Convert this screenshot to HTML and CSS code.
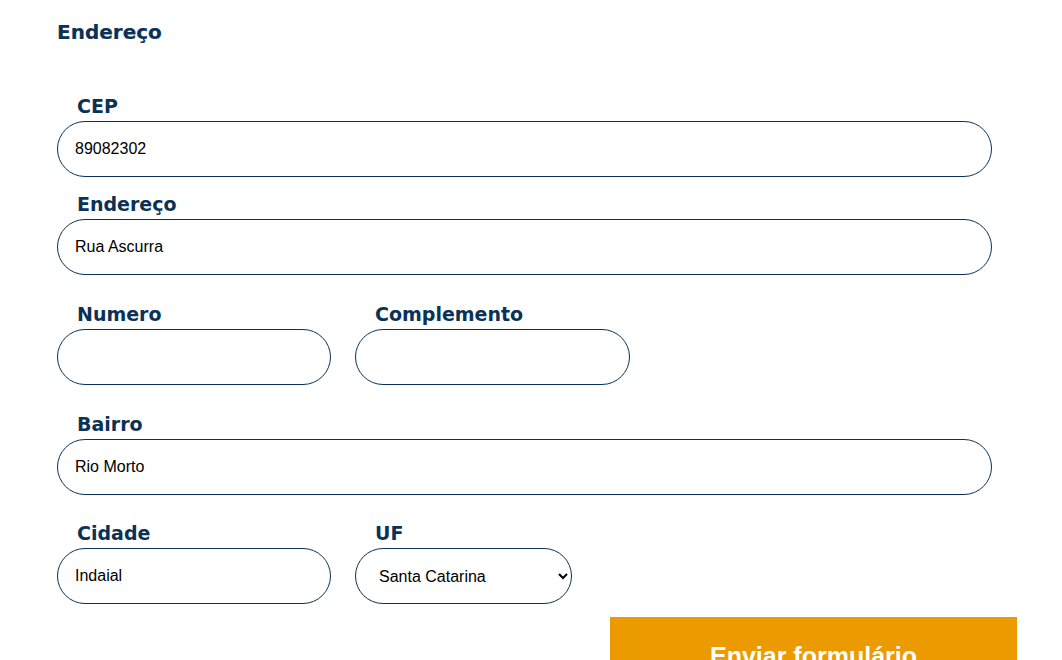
FILE: index.html
```html
<!DOCTYPE html>
<html lang="pt-BR">
<head>
<meta charset="utf-8">
<title>Endereço</title>
<link rel="stylesheet" href="styles.css">
</head>
<body>
<form class="form">
  <h2 class="title">Endereço</h2>
  <div class="group tight">
    <div class="field full">
      <label class="label" for="cep">CEP</label>
      <input class="input" id="cep" type="text" value="89082302">
    </div>
    <div class="field full gap-sm">
      <label class="label" for="end">Endereço</label>
      <input class="input" id="end" type="text" value="Rua Ascurra">
    </div>
  </div>
  <div class="row">
    <div class="field half">
      <label class="label" for="num">Numero</label>
      <input class="input" id="num" type="text" value="">
    </div>
    <div class="field half wide">
      <label class="label" for="comp">Complemento</label>
      <input class="input" id="comp" type="text" value="">
    </div>
  </div>
  <div class="row">
    <div class="field full">
      <label class="label" for="bairro">Bairro</label>
      <input class="input" id="bairro" type="text" value="Rio Morto">
    </div>
  </div>
  <div class="row last">
    <div class="field half">
      <label class="label" for="cidade">Cidade</label>
      <input class="input" id="cidade" type="text" value="Indaial">
    </div>
    <div class="field uf">
      <label class="label" for="uf">UF</label>
      <select class="select" id="uf">
        <option>Santa Catarina</option>
      </select>
    </div>
  </div>
  <div class="actions">
    <button class="submit" type="button">Enviar formulário</button>
  </div>
</form>
</body>
</html>
```
FILE: styles.css
```css
html, body {
  margin: 0;
  padding: 0;
  background: #ffffff;
  overflow: hidden;
}
body {
  width: 1062px;
  height: 660px;
}
.form {
  padding: 19px 0 0 57px;
  width: 960px;
}
.title {
  margin: 0;
  font-family: "DejaVu Sans", sans-serif;
  font-weight: 700;
  font-size: 20px;
  line-height: 27px;
  color: #0a3256;
  -webkit-text-stroke: 0.2px #0a3256;
}
.group.tight {
  margin-top: 47px;
  display: flex;
  flex-direction: column;
}
.gap-sm {
  margin-top: 14px;
}
.row {
  display: flex;
  gap: 24px;
  margin-top: 26px;
}
.row.last {
  margin-top: 25px;
}
.field {
  display: flex;
  flex-direction: column;
}
.field.full {
  width: 935px;
}
.field.half {
  width: 274px;
}
.field.half.wide {
  width: 275px;
}
.field.uf {
  width: 217px;
}
.label {
  display: block;
  padding: 0 0 2px 20px;
  font-family: "DejaVu Sans", sans-serif;
  font-weight: 700;
  font-size: 19px;
  line-height: 26px;
  color: #0a3256;
}
.input,
.select {
  box-sizing: border-box;
  height: 56px;
  width: 100%;
  margin: 0;
  border: 1px solid #0a3256;
  border-radius: 28px;
  background: #ffffff;
  font-family: "Liberation Sans", Arial, sans-serif;
  font-size: 16px;
  color: #000000;
  outline: none;
}
.input {
  padding: 0 17px;
}
.select {
  padding: 0 8px 0 19px;
}
.actions {
  width: 960px;
  display: flex;
  justify-content: flex-end;
  margin-top: 13px;
}
.submit {
  width: 407px;
  height: 80px;
  border: none;
  border-radius: 0;
  background: #eb9b00;
  color: #ffffff;
  font-family: "Liberation Sans", Arial, sans-serif;
  font-weight: 700;
  font-size: 25px;
  padding: 24px 0 0 0;
  line-height: 30px;
  display: flex;
  justify-content: center;
  align-items: flex-start;
}
```
